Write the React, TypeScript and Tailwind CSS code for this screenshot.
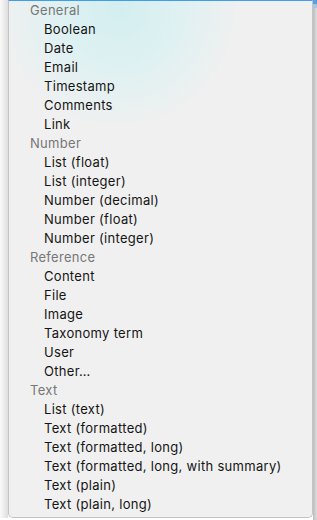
import React from "react";

const groups: { title: string; items: string[] }[] = [
  { title: "General", items: ["Boolean", "Date", "Email", "Timestamp", "Comments", "Link"] },
  { title: "Number", items: ["List (float)", "List (integer)", "Number (decimal)", "Number (float)", "Number (integer)"] },
  { title: "Reference", items: ["Content", "File", "Image", "Taxonomy term", "User", "Other…"] },
  {
    title: "Text",
    items: [
      "List (text)",
      "Text (formatted)",
      "Text (formatted, long)",
      "Text (formatted, long, with summary)",
      "Text (plain)",
      "Text (plain, long)",
    ],
  },
];

export default function App() {
  return (
    <div className="flex w-[317px] h-[520px] bg-white" style={{ fontFamily: "Inter, 'Noto Sans', sans-serif" }}>
      <div className="w-[8px] h-[518px] bg-gradient-to-r from-[#fafafa] to-[#dedede]" />
      <div className="w-[305px] h-[518px] border-t-[1.5px] border-t-[#3f9cf3] border-b border-x border-[#c4c4c4] rounded-b-[5px] bg-[radial-gradient(circle_at_110px_8px,#d3eef0_0px,#dff1f2_60px,#f0f0f0_120px)]">
        {groups.map((g) => (
          <div key={g.title}>
            <div className="h-[19px] leading-[19px] pl-[21px] text-[13px] tracking-[0.3px] text-[#777777]">{g.title}</div>
            {g.items.map((it) => (
              <div key={it} className="h-[19px] leading-[19px] pl-[35px] text-[13px] tracking-[0.3px] text-[#151515]">
                {it}
              </div>
            ))}
          </div>
        ))}
      </div>
      <div className="flex-1 h-[520px] bg-gradient-to-r from-[#bdbdbd] to-[#dcdcdc] flex flex-col">
        <div className="h-[4px] bg-[#5a9fe0]" />
        <div className="h-[4px] bg-[#a8c6e4]" />
      </div>
    </div>
  );
}
